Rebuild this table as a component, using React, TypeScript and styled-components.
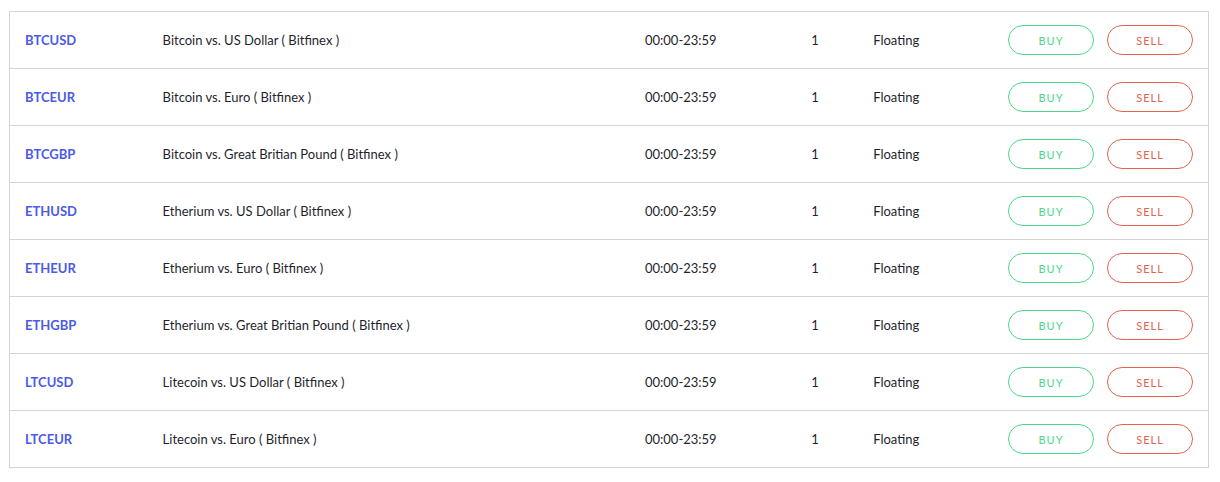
import React from "react";
import styled, { createGlobalStyle } from "styled-components";

const Global = createGlobalStyle`
  html, body { margin: 0; padding: 0; background: #fff; }
  body { font-family: "Lato", "Open Sans", sans-serif; }
`;

const Page = styled.div`
  padding: 11px 11px 0 9px;
`;

const Table = styled.table`
  width: 1200px;
  border-collapse: collapse;
  border: 1px solid #d4d4d4;
  table-layout: fixed;
`;

const Col = styled.col<{ $w: number }>`
  width: ${(p) => p.$w}px;
`;

const Row = styled.tr`
  height: 57px;
  border-bottom: 1px solid #d4d4d4;
`;

const Cell = styled.td<{ $flush?: boolean }>`
  padding: 0 0 0 ${(p) => (p.$flush ? 0 : 15)}px;
  font-size: 13px;
  color: #1f1f2e;
  vertical-align: middle;
  text-align: left;
  white-space: nowrap;
`;

const Symbol = styled.a`
  color: #4a5be6;
  font-weight: 700;
  text-decoration: none;
`;

const Actions = styled.div`
  display: flex;
  justify-content: flex-end;
  gap: 13px;
  padding-right: 15px;
`;

const Pill = styled.button<{ $tone: "buy" | "sell" }>`
  width: 86px;
  height: 30px;
  border-radius: 15px;
  background: #fff;
  border: 1px solid ${(p) => (p.$tone === "buy" ? "#4bd88a" : "#e2634f")};
  color: ${(p) => (p.$tone === "buy" ? "#4bd88a" : "#e2634f")};
  font-family: "Lato", sans-serif;
  font-size: 11px;
  letter-spacing: 1px;
  padding: 0;
  cursor: pointer;
`;

const rows = [
  ["BTCUSD", "Bitcoin vs. US Dollar ( Bitfinex )"],
  ["BTCEUR", "Bitcoin vs. Euro ( Bitfinex )"],
  ["BTCGBP", "Bitcoin vs. Great Britian Pound ( Bitfinex )"],
  ["ETHUSD", "Etherium vs. US Dollar ( Bitfinex )"],
  ["ETHEUR", "Etherium vs. Euro ( Bitfinex )"],
  ["ETHGBP", "Etherium vs. Great Britian Pound ( Bitfinex )"],
  ["LTCUSD", "Litecoin vs. US Dollar ( Bitfinex )"],
  ["LTCEUR", "Litecoin vs. Euro ( Bitfinex )"],
];

export default function App() {
  return (
    <>
      <Global />
      <Page>
        <Table>
          <colgroup>
            <Col $w={138} />
            <Col $w={482} />
            <Col $w={166} />
            <Col $w={62} />
            <Col $w={135} />
            <Col $w={215} />
          </colgroup>
          <tbody>
            {rows.map(([sym, name]) => (
              <Row key={sym}>
                <Cell>
                  <Symbol href="#">{sym}</Symbol>
                </Cell>
                <Cell>{name}</Cell>
                <Cell>00:00-23:59</Cell>
                <Cell>1</Cell>
                <Cell>Floating</Cell>
                <Cell $flush>
                  <Actions>
                    <Pill $tone="buy">BUY</Pill>
                    <Pill $tone="sell">SELL</Pill>
                  </Actions>
                </Cell>
              </Row>
            ))}
          </tbody>
        </Table>
      </Page>
    </>
  );
}
